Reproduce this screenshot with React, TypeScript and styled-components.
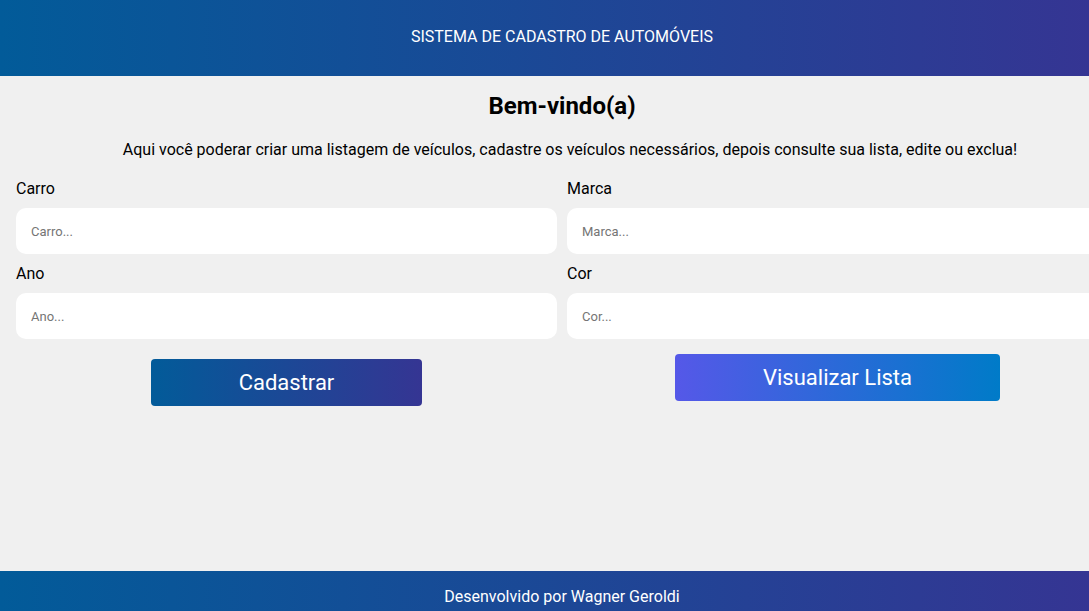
import React from "react";
import styled, { createGlobalStyle } from "styled-components";

const Global = createGlobalStyle`
  html, body { margin: 0; padding: 0; overflow: hidden; }
  body { background: #f0f0f0; font-family: Roboto, "Liberation Sans", sans-serif; color: #000; }
  * { box-sizing: border-box; }
`;

const Page = styled.div`
  width: 1124px;
  height: calc(100vh + 10px);
  display: flex;
  flex-direction: column;
`;

const Header = styled.header`
  height: 76px;
  flex-shrink: 0;
  background: linear-gradient(90deg, #025b99 0%, #353593 97%);
  color: #fff;
  display: flex;
  align-items: center;
  justify-content: center;
  font-size: 16px;
  padding-bottom: 4px;
`;

const Main = styled.main`
  flex: 1;
  padding: 0 0 0 16px;
`;

const Title = styled.h1`
  margin: 16px 0 0;
  padding-right: 16px;
  text-align: center;
  font-size: 24px;
  font-weight: 700;
  line-height: 28px;
`;

const Intro = styled.p`
  margin: 20px 0 0;
  text-align: center;
  font-size: 16px;
  line-height: 19px;
`;

const Form = styled.div`
  margin-top: 20px;
  display: grid;
  grid-template-columns: 541px 541px;
  column-gap: 10px;
`;

const Field = styled.div`
  display: flex;
  flex-direction: column;
`;

const Label = styled.label`
  font-size: 16px;
  line-height: 19px;
  margin-bottom: 10px;
`;

const Input = styled.input`
  height: 46px;
  border: none;
  border-radius: 10px;
  background: #fff;
  padding: 0 15px;
  font-family: Roboto, "Liberation Sans", sans-serif;
  font-size: 13px;
  margin-bottom: 10px;
  outline: none;
  &::placeholder { color: #757575; }
`;

const ButtonCell = styled.div<{ $top: number }>`
  display: flex;
  justify-content: center;
  padding-top: ${(p) => p.$top}px;
`;

const Button = styled.button<{ $w: number; $alt?: boolean }>`
  width: ${(p) => p.$w}px;
  height: 47px;
  border: none;
  border-radius: 4px;
  color: #fff;
  font-family: Roboto, "Liberation Sans", sans-serif;
  font-size: 22px;
  background: ${(p) =>
    p.$alt
      ? "linear-gradient(90deg, #5558e8 0%, #007bc8 100%)"
      : "linear-gradient(90deg, #025b99 0%, #353593 100%)"};
`;

const Footer = styled.footer`
  height: 50px;
  flex-shrink: 0;
  background: linear-gradient(90deg, #025b99 0%, #353593 97%);
  color: #fff;
  display: flex;
  align-items: center;
  justify-content: center;
  font-size: 16px;
`;

export default function App() {
  return (
    <>
      <Global />
      <Page>
        <Header>SISTEMA DE CADASTRO DE AUTOMÓVEIS</Header>
        <Main>
          <Title>Bem-vindo(a)</Title>
          <Intro>
            Aqui você poderar criar uma listagem de veículos, cadastre os veículos necessários, depois consulte sua lista, edite ou exclua!
          </Intro>
          <Form>
            <Field>
              <Label>Carro</Label>
              <Input placeholder="Carro..." />
            </Field>
            <Field>
              <Label>Marca</Label>
              <Input placeholder="Marca..." />
            </Field>
            <Field>
              <Label>Ano</Label>
              <Input placeholder="Ano..." />
            </Field>
            <Field>
              <Label>Cor</Label>
              <Input placeholder="Cor..." />
            </Field>
            <ButtonCell $top={10}>
              <Button $w={271}>Cadastrar</Button>
            </ButtonCell>
            <ButtonCell $top={5}>
              <Button $w={325} $alt>Visualizar Lista</Button>
            </ButtonCell>
          </Form>
        </Main>
        <Footer>Desenvolvido por Wagner Geroldi</Footer>
      </Page>
    </>
  );
}
